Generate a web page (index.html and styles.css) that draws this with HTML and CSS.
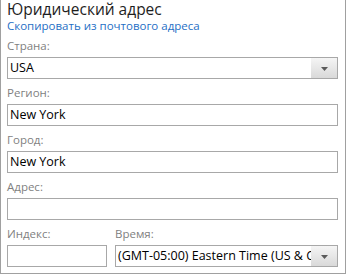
FILE: index.html
```html
<!DOCTYPE html>
<html lang="ru">
<head>
    <meta charset="UTF-8">
    <title>Юридический адрес</title>
    <link rel="stylesheet" href="styles.css">
</head>
<body>
    <div class="panel">
        <div class="panel-title">Юридический адрес</div>
        <a class="copy-link" href="#">Скопировать из почтового адреса</a>

        <div class="field">
            <label class="field-label">Страна:</label>
            <div class="select">
                <span class="select-value">USA</span>
                <span class="select-btn">
                    <svg width="7" height="4" viewBox="0 0 7 4"><polygon points="0,0 7,0 3.5,4" fill="#5a5a5a"/></svg>
                </span>
            </div>
        </div>

        <div class="field">
            <label class="field-label">Регион:</label>
            <div class="input">New York</div>
        </div>

        <div class="field">
            <label class="field-label">Город:</label>
            <div class="input">New York</div>
        </div>

        <div class="field">
            <label class="field-label">Адрес:</label>
            <div class="input"></div>
        </div>

        <div class="field-row">
            <div>
                <label class="field-label">Индекс:</label>
                <div class="input"></div>
            </div>
            <div class="field-col">
                <label class="field-label">Время:</label>
                <div class="select">
                    <span class="select-value">(GMT-05:00) Eastern Time (US &amp; Canada)</span>
                    <span class="select-btn">
                        <svg width="7" height="4" viewBox="0 0 7 4"><polygon points="0,0 7,0 3.5,4" fill="#5a5a5a"/></svg>
                    </span>
                </div>
            </div>
        </div>
    </div>
</body>
</html>
```

FILE: styles.css
```css
body {
    margin: 0;
    background: #fff;
    font-family: "Segoe UI", "Open Sans", sans-serif;
}
.panel {
    width: 346px;
    box-sizing: border-box;
    border: 1px solid #a0a0a0;
    border-top: none;
    padding: 0 7px 6px 6px;
}
.panel-title {
    font-size: 15.5px;
    line-height: 19px;
    color: #1e1e1e;
}
.copy-link {
    display: block;
    font-size: 11.5px;
    line-height: 13px;
    color: #1f6fc5;
    text-decoration: none;
    margin-bottom: 6px;
}
.field {
    margin-bottom: 6px;
}
.field-label {
    display: block;
    font-size: 11.5px;
    line-height: 16px;
    height: 16px;
    margin-bottom: 3px;
    color: #7f7f7f;
}
.input,
.select {
    height: 22px;
    box-sizing: border-box;
    border: 1px solid #a8a8a8;
    background: #fff;
    font-size: 12.5px;
    line-height: 20px;
    color: #000;
}
.input {
    padding: 0 2px;
}
.select {
    display: flex;
}
.select-value {
    flex: 1;
    min-width: 0;
    padding-left: 2px;
    overflow: hidden;
    white-space: nowrap;
}
.select-btn {
    width: 26px;
    flex-shrink: 0;
    display: flex;
    justify-content: center;
    align-items: center;
    background: linear-gradient(to bottom, #f5f5f5, #d9d9d9);
}
.select-btn svg {
    display: block;
    margin-top: 1px;
}
.field-row {
    display: grid;
    grid-template-columns: 100px minmax(0, 1fr);
    column-gap: 8px;
}
.field-col {
    min-width: 0;
}
```
